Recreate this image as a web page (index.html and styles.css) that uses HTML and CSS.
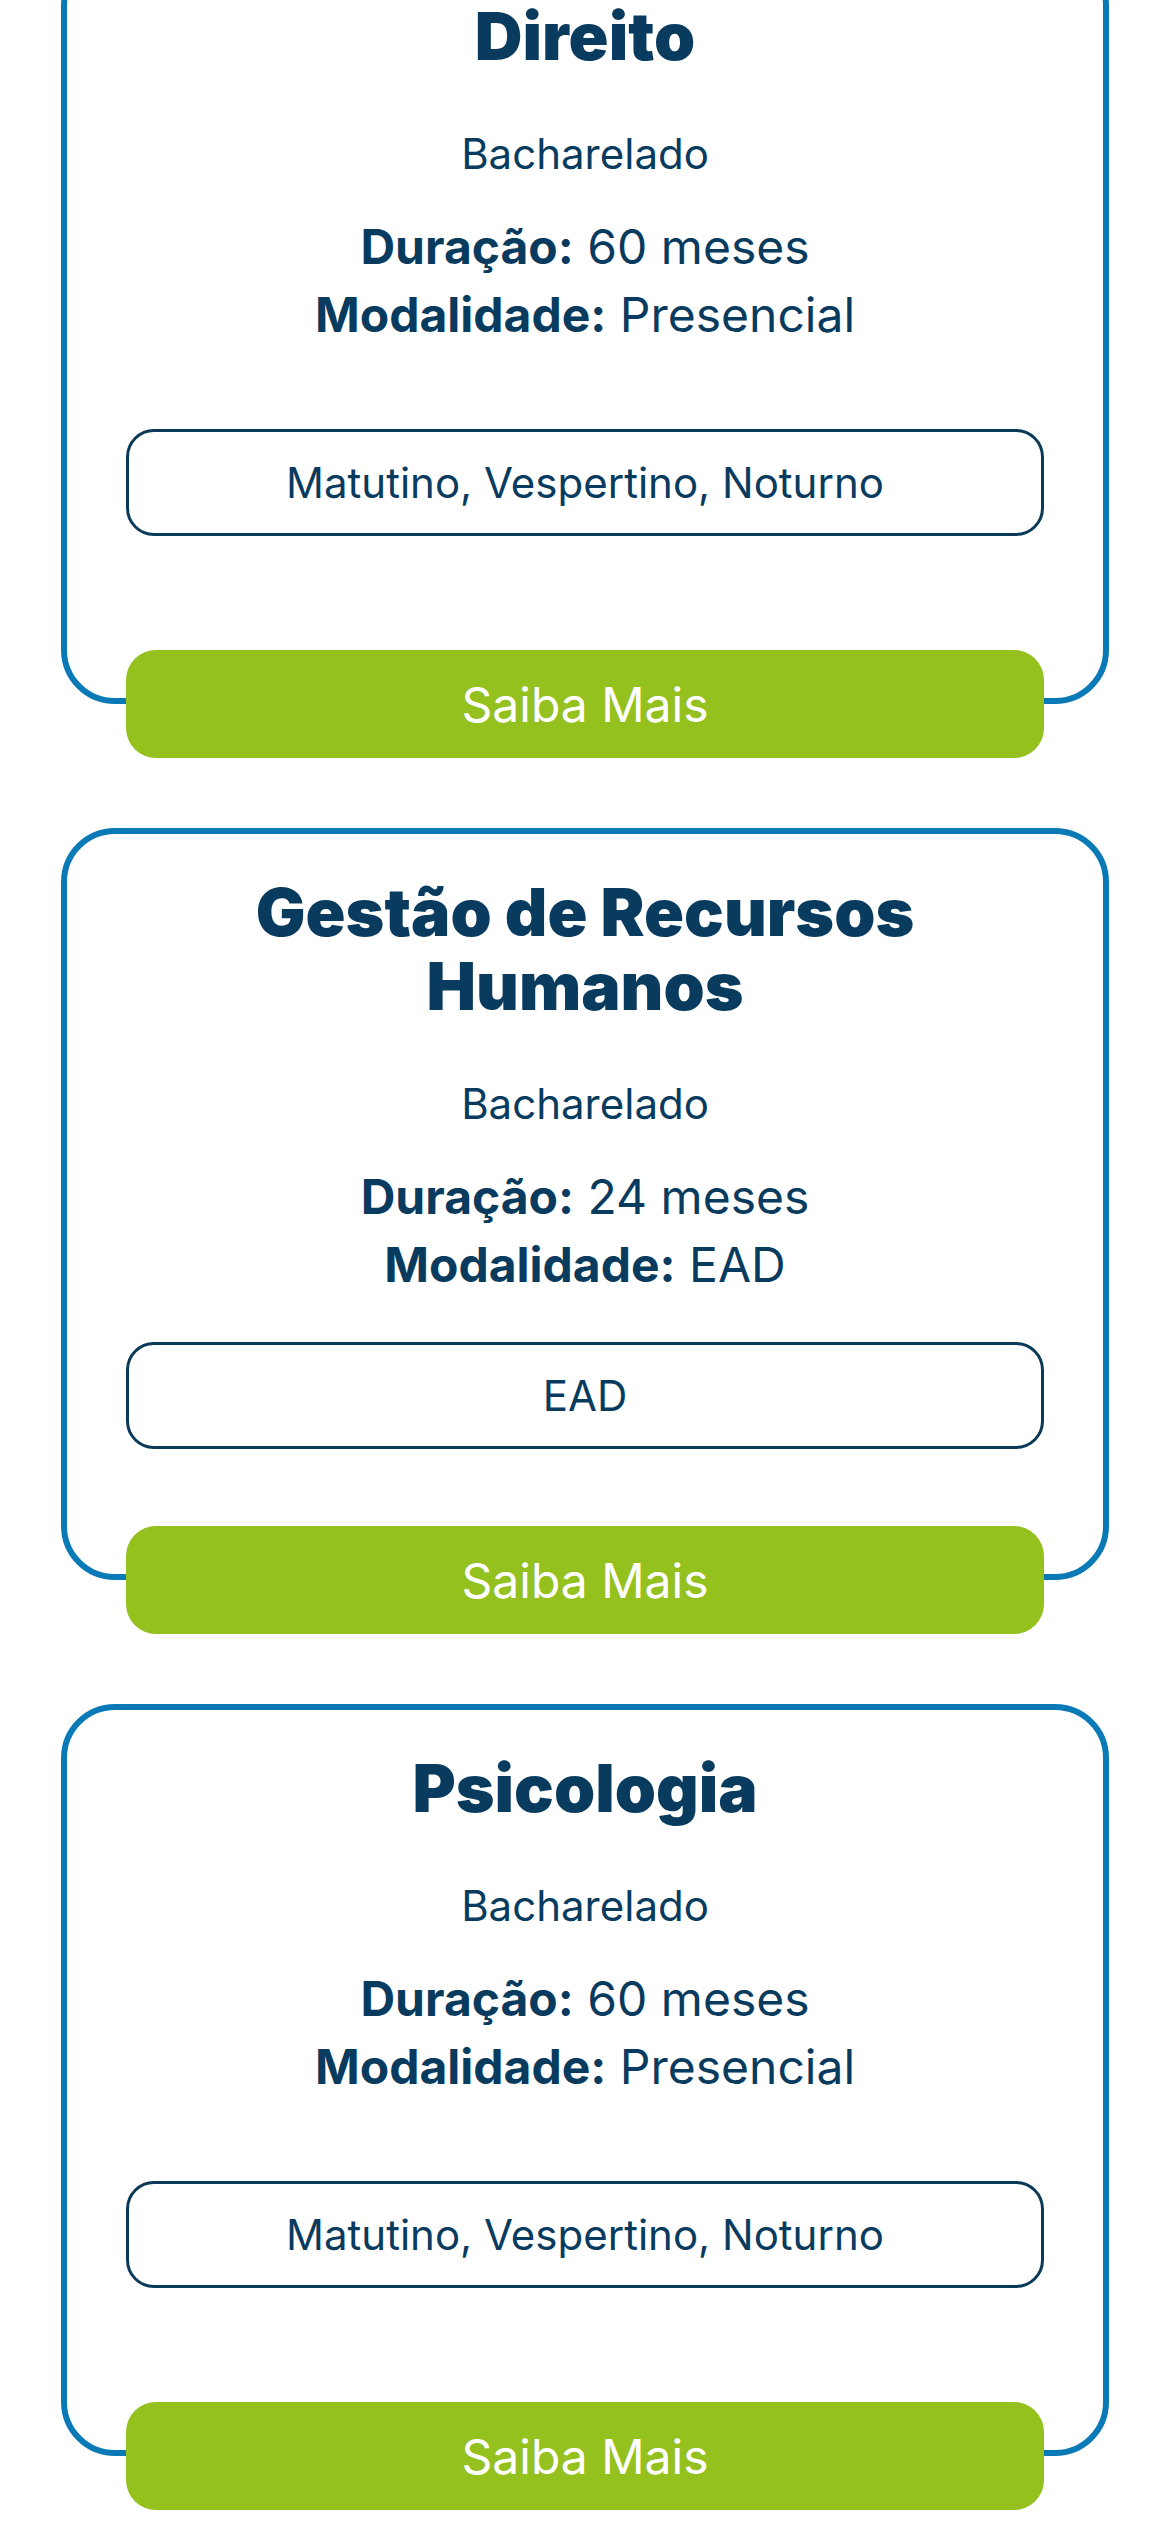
FILE: index.html
```html
<!DOCTYPE html>
<html lang="pt-BR">
<head>
    <meta charset="UTF-8">
    <meta name="viewport" content="width=device-width, initial-scale=1.0">
    <title>Cursos</title>
    <link rel="stylesheet" href="styles.css">
</head>
<body>
    <div class="course-list">
        <div class="course-card">
            <div class="course-head">
                <h2>Direito</h2>
                <p class="course-type">Bacharelado</p>
                <div class="course-info">
                    <p><strong>Duração:</strong> 60 meses</p>
                    <p><strong>Modalidade:</strong> Presencial</p>
                </div>
            </div>
            <div class="course-shift">Matutino, Vespertino, Noturno</div>
            <button class="course-button">Saiba Mais</button>
        </div>

        <div class="course-card">
            <div class="course-head">
                <h2>Gestão de Recursos Humanos</h2>
                <p class="course-type">Bacharelado</p>
                <div class="course-info">
                    <p><strong>Duração:</strong> 24 meses</p>
                    <p><strong>Modalidade:</strong> EAD</p>
                </div>
            </div>
            <div class="course-shift">EAD</div>
            <button class="course-button">Saiba Mais</button>
        </div>

        <div class="course-card">
            <div class="course-head">
                <h2>Psicologia</h2>
                <p class="course-type">Bacharelado</p>
                <div class="course-info">
                    <p><strong>Duração:</strong> 60 meses</p>
                    <p><strong>Modalidade:</strong> Presencial</p>
                </div>
            </div>
            <div class="course-shift">Matutino, Vespertino, Noturno</div>
            <button class="course-button">Saiba Mais</button>
        </div>
    </div>
</body>
</html>
```

FILE: styles.css
```css
body {
    margin: 0;
    padding: 0;
    background-color: #fff;
    font-family: Inter, "Noto Sans", sans-serif;
    color: #083b5e;
}

.course-list {
    display: flex;
    flex-direction: column;
    gap: 124px;
    padding: 0 61px 120px;
    margin-top: -48px;
}

.course-card {
    box-sizing: border-box;
    height: 752px;
    border: 6px solid #0a7ab6;
    border-radius: 54px;
    padding: 41px 59px 0;
    background: #fff;
    display: flex;
    flex-direction: column;
    justify-content: space-between;
    text-align: center;
}

.course-head h2 {
    margin: 0;
    font-size: 66px;
    line-height: 74px;
    font-weight: 900;
}

.course-type {
    margin: 51px 0 0;
    font-size: 42px;
    line-height: 60px;
}

.course-info {
    margin-top: 29px;
    font-size: 48px;
    line-height: 68px;
}

.course-info p {
    margin: 0;
}

.course-info strong {
    font-weight: 700;
}

.course-shift {
    box-sizing: border-box;
    height: 107px;
    border: 3px solid #0a3a58;
    border-radius: 28px;
    display: flex;
    align-items: center;
    justify-content: center;
    font-size: 42px;
}

.course-button {
    height: 108px;
    margin-top: 35px;
    margin-bottom: -60px;
    border: none;
    border-radius: 30px;
    background-color: #95c11f;
    color: #fff;
    font-family: Inter, "Noto Sans", sans-serif;
    font-size: 48px;
    cursor: pointer;
}
```
